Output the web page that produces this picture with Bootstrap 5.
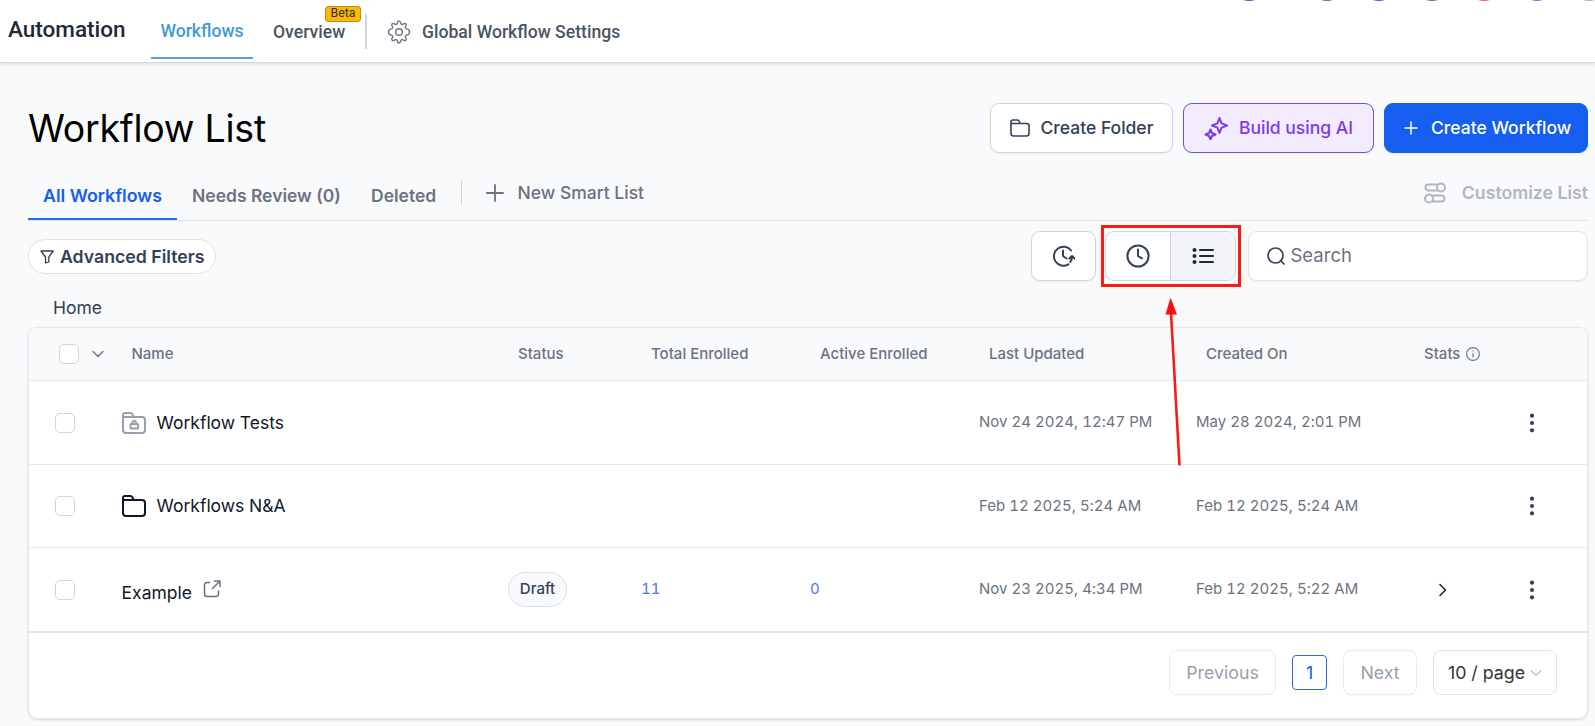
<!DOCTYPE html>
<html lang="en">
<head>
<meta charset="utf-8">
<meta name="viewport" content="width=device-width, initial-scale=1">
<title>Automation - Workflow List</title>
<link href="https://cdn.jsdelivr.net/npm/bootstrap@5.3.0/dist/css/bootstrap.min.css" rel="stylesheet">
<style>
body{font-family:Inter,"Liberation Sans",sans-serif;background:#f9fafc;color:#344054;width:1595px;height:726px;overflow:hidden;font-size:17.5px;line-height:24px}
svg{display:block;flex:none;fill:none;stroke-linecap:round;stroke-linejoin:round}
svg:not([stroke]){stroke:currentColor}
.topbar{height:63px;background:#fff;border-bottom:1px solid #d5dcdb;box-shadow:0 1px 4px rgba(16,24,40,.16);font-family:Roboto,sans-serif;font-weight:500;font-size:17.6px;color:#4b5563;padding-left:8px;position:relative}
.brand-name{font-size:22.5px;color:#1f2937;width:117px;margin-right:26px;padding-top:17px}
.toplink{height:59px;padding-top:19px;white-space:nowrap}
.toplink.on{width:102px;color:#4299d6;border-bottom:2px solid #5a9fd8;text-align:center}
.over{width:72px;margin-left:20px;padding-top:20px;position:relative}
.beta{position:absolute;left:52px;top:6px;width:36px;height:16px;background:#fbb904;border:1px solid #c28b13;border-radius:3px;font-size:12.3px;line-height:13px;font-weight:400;color:#30302a;text-align:center}
.tdiv{width:2px;height:35px;background:#d1d5db;margin:14px 20px 0 20px}
.dots i{position:absolute;top:-35px;width:36px;height:36px;border-radius:50%}
.main{padding:0 7px 0 28px}
.titlerow{height:50px;margin-top:40px}
.pagetitle{font-size:37.5px;line-height:52px;font-weight:400;letter-spacing:-.25px;color:#000;margin:0}
.bt{height:50px;border-radius:9px;border:1px solid #d0d5dd;background:#fff;font-weight:500;box-shadow:0 1px 2px rgba(16,24,40,.05);white-space:nowrap}
.bt.ai{background:#f3ebfe;border-color:#7a4be0;color:#7c3aed}
.bt.cw{background:#155eef;border-color:#155eef;color:#fff}
.tabrow{height:50px;margin-top:18px;border-bottom:1px solid #e1e4e8;font-weight:600;color:#6b7280}
.tb{height:49px;padding-top:13px;white-space:nowrap}
.tb.on{color:#155eef;border-bottom:2px solid #256bfa;width:149px;text-align:center;font-size:17.8px}
.toolrow{height:50px;margin-top:10px}
.pill{border:1px solid #dfe2e7;border-radius:18px;background:#fff;font-size:17.7px}
.redbox{border:3px solid #fb1a14;width:140px;height:62px;padding:2px 2px 2px 1px;margin:-6px 7px 0 5px}
.grp{border:1px solid #d0d5dd;border-radius:9px;background:#fff;overflow:hidden;height:50px;width:131px;margin-top:1px}
.home{height:24px;margin:15px 0 0 25px}
.listcard{height:392px;margin-top:7px;border:1px solid #e4e7ec;border-radius:9px;background:#fff;box-shadow:0 1px 3px rgba(16,24,40,.14);overflow:hidden}
.wf{table-layout:fixed;width:1558px;margin:0;border-collapse:separate;border-spacing:0;font-size:15px;color:#6b7280}
.wf th,.wf td{padding:0 0 0 10px;border-bottom:1px solid #e7e9ee;vertical-align:middle;white-space:nowrap;line-height:20px}
.wf th{height:53px;background:#f9fafb;font-weight:500;padding-left:20px;color:#6b7280}
.wf td{height:83.5px;letter-spacing:.02px;font-feature-settings:"tnum"}
.wf tr:last-child td{border-bottom:2px solid #dfe1e5;height:85px}
.wf .nm{font-size:17.5px;letter-spacing:0;color:#101828;padding-left:9.6px}
.wf .r1{padding-top:2px}
.wf .ex{padding-bottom:2px}
.ck{width:20px;height:20px;border:1px solid #d0d5dd;border-radius:5px;background:#fff;flex:none}
.draft{width:59px;height:35px;border:1px solid #dddfe4;border-radius:18px;background:#f9fafc;color:#344054;font-weight:500;letter-spacing:0;display:flex;align-items:center;justify-content:center;padding-bottom:2px}
.lk{color:#4f74ef!important}
.kb{fill:#344054;stroke:none!important;margin-left:-.5px}
.pg{height:45px;border:1px solid #e7eaee;border-radius:8px;color:#98a0ad;display:flex;align-items:center;justify-content:center;font-size:17.8px;white-space:nowrap}
.arrow{position:absolute;left:1160px;top:296px}
</style>
</head>
<body>
<header class="topbar d-flex align-items-start">
  <div class="brand-name">Automation</div>
  <div class="toplink on">Workflows</div>
  <div class="toplink over">Overview<span class="beta">Beta</span></div>
  <div class="tdiv"></div>
  <svg width="24" height="24" viewBox="0 0 24 24" stroke="#6b7280" stroke-width="1.4" style="margin-top:20px"><path d="M10.3 3.1c.4-2.8 3-2.8 3.4 0 .2 1.2 1.5 1.8 2.5 1 2.300-1.700 4.100.1 2.400 2.400-.7 1-.1 2.200 1 2.400 3.900.5 3.900 5.700 0 6.200-1.100.2-1.700 1.400-1 2.400 1.700 2.300-.1 4.100-2.400 2.400-1-.8-2.300-.2-2.500 1-.4 2.800-3 2.800-3.400 0-.2-1.200-1.500-1.800-2.500-1-2.300 1.700-4.100-.1-2.400-2.400.7-1 .1-2.200-1-2.400-3.900-.5-3.900-5.700 0-6.200 1.100-.2 1.700-1.400 1-2.400-1.700-2.300.1-4.100 2.400-2.400 1 .8 2.300.2 2.500-1z"/><circle cx="12" cy="12" r="3.300"/></svg>
  <div class="toplink" style="margin-left:11px;padding-top:20px">Global Workflow Settings</div>
  <div class="dots"><i style="left:1231px;background:#5b4fc4"></i><i style="left:1309px;background:#3f8a5a"></i><i style="left:1361px;background:#4a5bd0"></i><i style="left:1414px;background:#4a8072"></i><i style="left:1466px;background:#ec6a50"></i><i style="left:1519px;background:#5580e8"></i><i style="left:1571px;background:#b5b58a"></i></div>
</header>
<main class="main">
  <div class="titlerow d-flex justify-content-between">
    <h1 class="pagetitle">Workflow List</h1>
    <div class="d-flex">
      <div class="bt d-flex align-items-center" style="width:183px;padding-left:19px;margin-right:10px"><svg width="20" height="18" viewBox="0 0 20 18" stroke-width="1.6"><path d="M1 5.500V3a2 2 0 0 1 2-2h4.200a2 2 0 0 1 1.700 1l1.300 2.500M1 4.500h15.500A2.500 2.500 0 0 1 19 7v7.500a2.500 2.500 0 0 1-2.500 2.500h-13A2.500 2.500 0 0 1 1 14.500z"/></svg><span style="margin-left:10.500px">Create Folder</span></div>
      <div class="bt ai d-flex align-items-center" style="width:191px;padding-left:20px;margin-right:10px"><svg width="24" height="24" viewBox="0 0 24 24" stroke-width="2"><path d="M15.500 2 17.600 7.400 23 9.500l-5.400 2.100L15.500 17l-2.100-5.400L8 9.500l5.400-2.100zM6.500 13.500 8 17l3.500 1.500L8 20l-1.500 3.500L5 20l-3.500-1.500L5 17z"/></svg><span style="margin-left:11px">Build using AI</span></div>
      <div class="bt cw d-flex align-items-center" style="width:204px;padding-left:19px"><svg width="14" height="14" viewBox="0 0 14 14" stroke-width="1.500"><path d="M7 1v12M1 7h12"/></svg><span style="margin-left:13px">Create Workflow</span></div>
    </div>
  </div>
  <div class="tabrow d-flex">
    <div class="tb on">All Workflows</div>
    <div class="tb" style="width:147px;margin-left:15px">Needs Review (0)</div>
    <div class="tb" style="width:66px;margin-left:32px">Deleted</div>
    <div style="width:1px;height:25px;background:#d0d5dd;margin:9px 24px 0 24px"></div>
    <svg width="18" height="18" viewBox="0 0 18 18" stroke-width="1.8" style="margin-top:12.500px"><path d="M9 1v16M1 9h16"/></svg>
    <div class="tb fw-medium" style="margin-left:13.500px;padding-top:10px;font-weight:500">New Smart List</div>
    <div class="d-flex ms-auto" style="color:#b1b6bf"><svg width="22" height="22" viewBox="0 0 22 22" stroke-width="2" style="margin-top:11px"><path d="M13 2.500H4.500a3 3 0 0 0 0 6H13M9 13.500h8.500a3 3 0 0 1 0 6H9"/><circle cx="17" cy="5.500" r="4"/><circle cx="5" cy="16.500" r="4"/></svg><div class="tb" style="margin-left:16px;padding-top:10px;font-size:17.700px">Customize List</div></div>
  </div>
  <div class="toolrow d-flex">
    <div class="pill d-flex align-items-center fw-semibold" style="width:188px;height:35px;margin-top:8px;padding-left:11px"><svg width="14" height="14" viewBox="0 0 14 14" stroke-width="1.300"><path d="M1 1h12.300L8.800 7v5L5.500 13V7z"/></svg><span style="margin-left:6px">Advanced Filters</span></div>
    <div class="bt d-flex align-items-center justify-content-center ms-auto" style="width:65px"><svg width="24" height="24" viewBox="0 0 24 24" stroke-width="2" style="margin-right:1px"><path d="M20 6.500A9.500 9.500 0 1 0 17.500 20.300M12 6.500V12l3.500 2.500M18.300 14.500l2.700-2.500 2.500 2.500M21 12.500c0 2-.5 3.800-1.700 5.500"/></svg></div>
    <div class="redbox"><div class="grp d-flex">
      <div class="d-flex align-items-center justify-content-center" style="width:64px"><svg width="24" height="24" viewBox="0 0 24 24" stroke-width="2"><circle cx="12" cy="12" r="10.600"/><path d="M12 5.500V12l4 2.300"/></svg></div>
      <div class="d-flex align-items-center justify-content-center flex-fill" style="background:#f2f4f7;border-left:1px solid #d0d5dd"><svg width="22" height="18" viewBox="0 0 22 18" stroke="#1d2939" stroke-width="2"><path d="M8 3h13M8 9h13M8 15h13"/><g fill="#1d2939" stroke="none"><circle cx="2.500" cy="3" r="2"/><circle cx="2.500" cy="9" r="2"/><circle cx="2.500" cy="15" r="2"/></g></svg></div>
    </div></div>
    <div class="bt d-flex align-items-center fw-normal" style="width:340px;padding-left:18px;color:#6b7280;border-color:#dfe2e7"><svg width="18" height="18" viewBox="0 0 18 18" stroke="#344054" stroke-width="1.700"><circle cx="8.500" cy="8.500" r="7.500"/><path d="m14 14 3 3"/></svg><span style="margin-left:5.500px;margin-top:-3px;font-size:18.500px">Search</span></div>
  </div>
  <div class="home">Home</div>
  <section class="listcard">
    <table class="wf">
      <colgroup><col style="width:83px"><col style="width:386px"><col style="width:133px"><col style="width:169px"><col style="width:169px"><col style="width:217px"><col style="width:218px"><col style="width:108px"><col></colgroup>
      <thead><tr><th style="padding-left:30px"><div class="d-flex align-items-center"><span class="ck"></span><svg width="12" height="8" viewBox="0 0 12 8" stroke-width="1.400" style="margin-left:13px"><path d="m1 1.500 5 5 5-5"/></svg></div></th><th style="padding-left:19.500px">Name</th><th>Status</th><th>Total Enrolled</th><th>Active Enrolled</th><th>Last Updated</th><th>Created On</th><th><div class="d-flex align-items-center">Stats<svg width="14" height="14" viewBox="0 0 14 14" stroke-width="1.100" style="margin-left:6px"><circle cx="7" cy="7" r="6.400"/><path d="M7 6.500V10M7 4v.3"/></svg></div></th><th></th></tr></thead>
      <tbody>
      <tr><td class="r1" style="padding-left:26px"><div class="ck"></div></td>
        <td class="nm r1"><div class="d-flex align-items-center"><svg width="24" height="22" viewBox="0 0 24 22" stroke="#98a0ae" stroke-width="2"><path d="M1 6V3a2 2 0 0 1 2-2h5.500a2 2 0 0 1 1.700 1L12 5M1 5h19a3 3 0 0 1 3 3v10a3 3 0 0 1-3 3H4a3 3 0 0 1-3-3z"/><rect x="8.500" y="12" width="7.500" height="4.500" rx=".5"/><path d="M10.500 11.500v-1a1.700 1.700 0 0 1 3.400 0v1"/></svg><span style="margin-left:11px">Workflow Tests</span></div></td><td></td><td></td><td></td><td>Nov 24 2024, 12:47 PM</td><td>May 28 2024, 2:01 PM</td><td></td>
        <td class="r1"><svg class="kb" width="20" height="20" viewBox="0 0 20 20"><circle cx="10" cy="2.700" r="2.100"/><circle cx="10" cy="10" r="2.100"/><circle cx="10" cy="17.300" r="2.100"/></svg></td></tr>
      <tr><td style="padding-left:26px"><div class="ck"></div></td>
        <td class="nm"><div class="d-flex align-items-center"><svg width="24" height="22" viewBox="0 0 24 22" stroke="#101828" stroke-width="2"><path d="M1 6V3a2 2 0 0 1 2-2h5.500a2 2 0 0 1 1.700 1L12 5M1 5h19a3 3 0 0 1 3 3v10a3 3 0 0 1-3 3H4a3 3 0 0 1-3-3z"/></svg><span style="margin-left:11px">Workflows N&amp;A</span></div></td><td></td><td></td><td></td><td>Feb 12 2025, 5:24 AM</td><td>Feb 12 2025, 5:24 AM</td><td></td>
        <td><svg class="kb" width="20" height="20" viewBox="0 0 20 20"><circle cx="10" cy="2.700" r="2.100"/><circle cx="10" cy="10" r="2.100"/><circle cx="10" cy="17.300" r="2.100"/></svg></td></tr>
      <tr><td style="padding-left:26px"><div class="ck"></div></td>
        <td class="nm"><div class="d-flex align-items-center"><span style="padding-top:6px">Example</span><svg width="18" height="18" viewBox="0 0 18 18" stroke="#667085" stroke-width="1.500" style="margin:-1px 0 0 11.500px"><path d="M6.500 2.500H4A2.500 2.500 0 0 0 1.500 5v9A2.500 2.500 0 0 0 4 16.500h9a2.500 2.500 0 0 0 2.500-2.500v-3M9.500 8.500 17 1M11.500 1H17v5.500"/></svg></div></td><td><span class="draft">Draft</span></td><td class="lk ex">11</td><td class="lk ex">0</td><td class="ex">Nov 23 2025, 4:34 PM</td><td class="ex">Feb 12 2025, 5:22 AM</td>
        <td><svg width="8" height="14" viewBox="0 0 8 14" stroke="#1d2939" stroke-width="1.600" style="margin-left:24.500px"><path d="m1 1.500 5.500 5.500L1 12.500"/></svg></td>
        <td><svg class="kb" width="20" height="20" viewBox="0 0 20 20"><circle cx="10" cy="2.700" r="2.100"/><circle cx="10" cy="10" r="2.100"/><circle cx="10" cy="17.300" r="2.100"/></svg></td></tr>
      </tbody>
    </table>
    <div class="d-flex align-items-center justify-content-end" style="padding:17px 30px 0 0">
      <div class="pg" style="width:107px">Previous</div>
      <div class="pg" style="width:35px;height:35px;border-color:#3763dd;border-radius:4px;color:#155eef;margin:0 16px">1</div>
      <div class="pg" style="width:74px">Next</div>
      <div class="pg" style="width:124px;margin-left:16px;color:#2f343d;border-color:#dfe2e6">10 / page<svg width="12" height="8" viewBox="0 0 12 8" stroke="#c0c4cc" stroke-width="1.300" style="margin-left:5px"><path d="m1 1.500 5 5 5-5"/></svg></div>
    </div>
  </section>
</main>
<svg class="arrow" width="26" height="172" viewBox="0 0 26 172" stroke="none"><path d="M11 17 19.500 169.500" stroke="#fb1a14" stroke-width="2.600" stroke-linecap="butt"/><path d="M10.500 1.500 17 18.500 5.500 18.500z" fill="#fb0d0d"/></svg>
<script src="https://cdn.jsdelivr.net/npm/bootstrap@5.3.0/dist/js/bootstrap.bundle.min.js"></script>
</body>
</html>
